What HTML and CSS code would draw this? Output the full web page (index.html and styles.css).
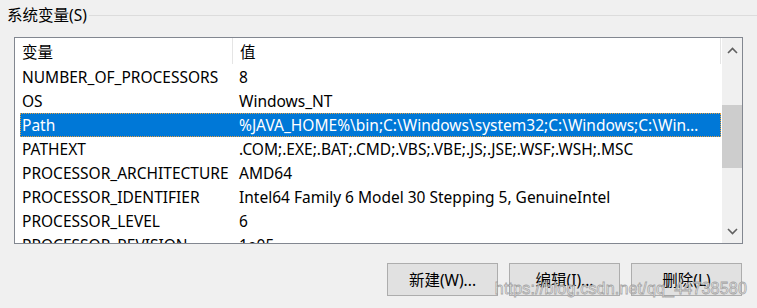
FILE: index.html
```html
<!DOCTYPE html>
<html lang="zh-CN">
    <head>
        <meta charset="UTF-8" />
        <meta name="viewport" content="width=device-width, initial-scale=1.0" />
        <title>系统变量</title>
        <link rel="stylesheet" href="styles.css">
    </head>
    <body>
        <div class="groupTitle">
            <span>系统变量(S)</span>
            <div class="groupLine"></div>
        </div>

        <div class="listBox">
            <div class="listArea">
                <div class="listHeader">
                    <div class="headName">变量</div>
                    <div class="headValue">值</div>
                </div>
                <div class="listRows">
                    <div class="row"><div class="cellName">NUMBER_OF_PROCESSORS</div><div class="cellValue">8</div></div>
                    <div class="row"><div class="cellName">OS</div><div class="cellValue">Windows_NT</div></div>
                    <div class="row selected"><div class="cellName">Path</div><div class="cellValue">%JAVA_HOME%\bin;C:\Windows\system32;C:\Windows;C:\Windows\System32\Wbem;C:\Windows\System32\WindowsPowerShell\v1.0\</div></div>
                    <div class="row"><div class="cellName">PATHEXT</div><div class="cellValue">.COM;.EXE;.BAT;.CMD;.VBS;.VBE;.JS;.JSE;.WSF;.WSH;.MSC</div></div>
                    <div class="row"><div class="cellName">PROCESSOR_ARCHITECTURE</div><div class="cellValue">AMD64</div></div>
                    <div class="row"><div class="cellName">PROCESSOR_IDENTIFIER</div><div class="cellValue">Intel64 Family 6 Model 30 Stepping 5, GenuineIntel</div></div>
                    <div class="row"><div class="cellName">PROCESSOR_LEVEL</div><div class="cellValue">6</div></div>
                    <div class="row"><div class="cellName">PROCESSOR_REVISION</div><div class="cellValue">1e05</div></div>
                </div>
            </div>
            <!-- vertical scrollbar -->
            <div class="scrollBar">
                <div class="scrollArrow">
                    <svg width="11" height="7" viewBox="0 0 11 7"><path d="M1 6 L5.5 1.5 L10 6" fill="none" stroke="#606060" stroke-width="1.6"/></svg>
                </div>
                <div class="scrollTrack">
                    <div class="scrollThumb"></div>
                </div>
                <div class="scrollArrow">
                    <svg width="11" height="7" viewBox="0 0 11 7"><path d="M1 1 L5.5 5.5 L10 1" fill="none" stroke="#606060" stroke-width="1.6"/></svg>
                </div>
            </div>
        </div>

        <div class="buttonRow">
            <button class="winButton">新建(W)...</button>
            <button class="winButton">编辑(I)...</button>
            <button class="winButton">删除(L)</button>
            <span class="watermark">https://blog.csdn.net/qq_44738580</span>
        </div>
    </body>
</html>
```

FILE: styles.css
```css
body {
    margin: 0;
    width: 757px;
    height: 308px;
    overflow: hidden;
    background: #f0f0f0;
    color: #000;
    font-family: "Noto Sans", "Noto Sans CJK SC", sans-serif;
    font-size: 15.5px;
}

/* Group title */
.groupTitle {
    display: flex;
    align-items: center;
    height: 30px;
    padding-left: 7px;
}
.groupTitle span {
    line-height: 30px;
    margin-top: -1px;
}
.groupLine {
    flex: 1;
    height: 1px;
    background: #dcdcdc;
    margin-left: 2px;
}

/* List box */
.listBox {
    display: flex;
    margin: 7px 0 0 14px;
    width: 727px;
    height: 205px;
    border: 1px solid #828790;
    background: #fff;
}
.listArea {
    flex: 1;
    overflow: hidden;
    min-width: 0;
}
.listHeader {
    display: flex;
    height: 27px;
    line-height: 29px;
}
.headName {
    width: 210px;
    padding-left: 7px;
    border-right: 1px solid #e5e5e5;
    height: 26px;
}
.headValue {
    flex: 1;
    padding-left: 7px;
    border-right: 1px solid #e5e5e5;
    height: 26px;
}
.listRows {
    padding-left: 5px;
}
.row {
    display: flex;
    height: 24px;
    line-height: 24px;
    white-space: nowrap;
}
.cellName {
    width: 210px;
    padding-left: 2px;
    flex-shrink: 0;
}
.cellValue {
    flex: 1;
    min-width: 0;
    padding-left: 7px;
    padding-right: 16px;
    overflow: hidden;
    text-overflow: ellipsis;
}
.row.selected {
    background: #0078d7;
    color: #fff;
    outline: 1px dotted #e8a040;
    outline-offset: -1px;
}

/* Scrollbar */
.scrollBar {
    width: 20px;
    margin-left: 1px;
    background: #f0f0f0;
    display: flex;
    flex-direction: column;
}
.scrollArrow {
    height: 24px;
    display: flex;
    align-items: center;
    justify-content: center;
}
.scrollTrack {
    flex: 1;
    padding-top: 43px;
}
.scrollThumb {
    height: 63px;
    background: #cdcdcd;
}

/* Buttons */
.buttonRow {
    position: relative;
    display: flex;
    justify-content: flex-end;
    gap: 11px;
    padding-right: 15px;
    margin-top: 19px;
}
.winButton {
    width: 111px;
    height: 33px;
    background: #e1e1e1;
    border: 1px solid #adadad;
    font-family: "Noto Sans", "Noto Sans CJK SC", sans-serif;
    font-size: 15.5px;
    color: #000;
    padding: 0;
}
.watermark {
    position: absolute;
    right: 10px;
    top: 17px;
    line-height: 18px;
    font-family: "Liberation Sans", sans-serif;
    font-size: 16px;
    letter-spacing: 0.2px;
    color: rgba(255, 255, 255, 0.9);
    -webkit-text-stroke: 0.8px rgba(130, 130, 130, 0.7);
    pointer-events: none;
}
```
